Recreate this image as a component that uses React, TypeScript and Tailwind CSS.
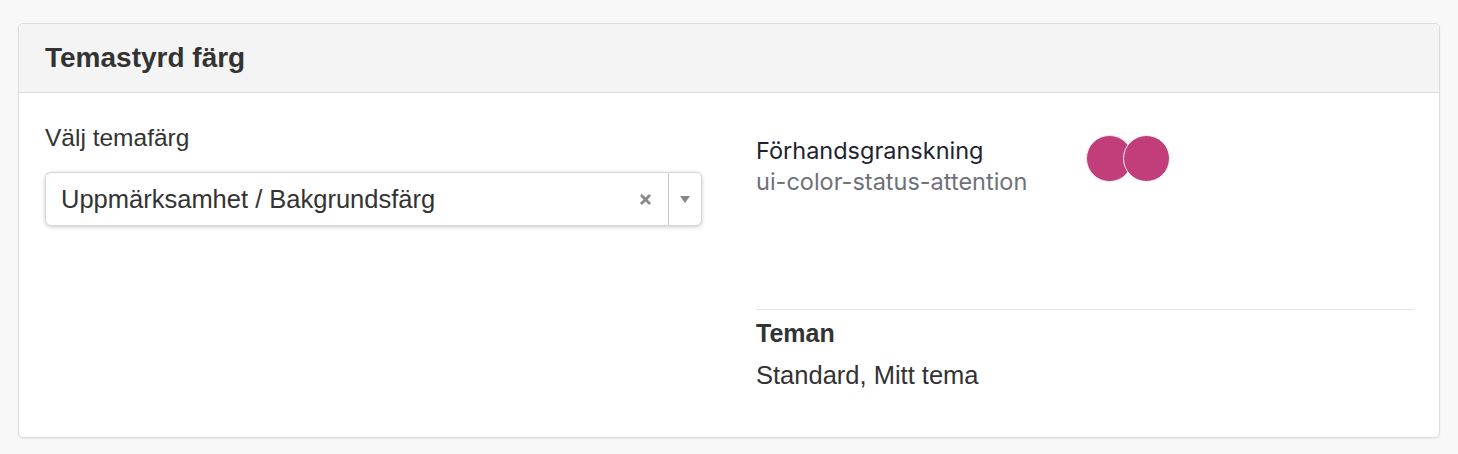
import { X } from 'lucide-react'

const swatch = 'bg-[#c13e7b]'

export default function App() {
  return (
    <div className="min-h-screen bg-[#f8f8f8] pt-[23px] pl-[18px] pr-[18px] font-['Liberation_Sans',Arial,sans-serif] text-[#333]">
      <div className="rounded-[5px] border border-[#dcdcdc] bg-white shadow-[0_1px_2px_rgba(0,0,0,0.06)]">
        {/* Header */}
        <div className="flex h-[69px] items-center rounded-t-[5px] border-b border-[#dedede] bg-[#f4f4f4] px-[26px]">
          <h2 className="text-[28px] font-bold leading-none text-[#333]">Temastyrd färg</h2>
        </div>

        {/* Body */}
        <div className="grid grid-cols-2 gap-x-[54px] px-[26px] pb-[47px] pt-[30px]">
          <div>
            <label className="block text-[24.5px] leading-[30px]">Välj temafärg</label>
            <div className="mt-[19px] flex h-[54px] items-center rounded-[6px] border border-[#d6d6d6] bg-white shadow-[0_1px_4px_rgba(0,0,0,0.2)]">
              <span className="flex-1 pl-[15px] text-[25.5px] text-[#333]">Uppmärksamhet / Bakgrundsfärg</span>
              <X className="mr-[15px] h-[15px] w-[15px] text-[#8a8a8a]" strokeWidth={4.5} />
              <div className="flex h-full w-[33px] items-center justify-center border-l border-[#c8c8c8]">
                <span className="border-x-[5px] border-t-[7px] border-x-transparent border-t-[#888]" />
              </div>
            </div>
          </div>

          <div>
            <div className="flex items-start">
              <div className="w-[330px] pt-[12px]">
                <div className="font-['Inter',sans-serif] text-[23.5px] leading-[31px] text-[#1f2330]">Förhandsgranskning</div>
                <div className="font-['Inter',sans-serif] text-[23.5px] leading-[31px] text-[#6e717a]">ui-color-status-attention</div>
              </div>
              <div className="flex pt-[12px]">
                <span className={`h-[47px] w-[47px] rounded-full border border-[#e8e8e8] ${swatch}`} />
                <span className={`-ml-[10px] h-[47px] w-[47px] rounded-full border border-[#f4f4f4] ${swatch}`} />
              </div>
            </div>

            <div className="mt-[112px] border-t border-[#e6e6e6] pt-[7px]">
              <div className="text-[25px] font-bold leading-[32px]">Teman</div>
              <div className="mt-[11px] text-[25.5px] leading-[30px]">Standard, Mitt tema</div>
            </div>
          </div>
        </div>
      </div>
    </div>
  )
}
